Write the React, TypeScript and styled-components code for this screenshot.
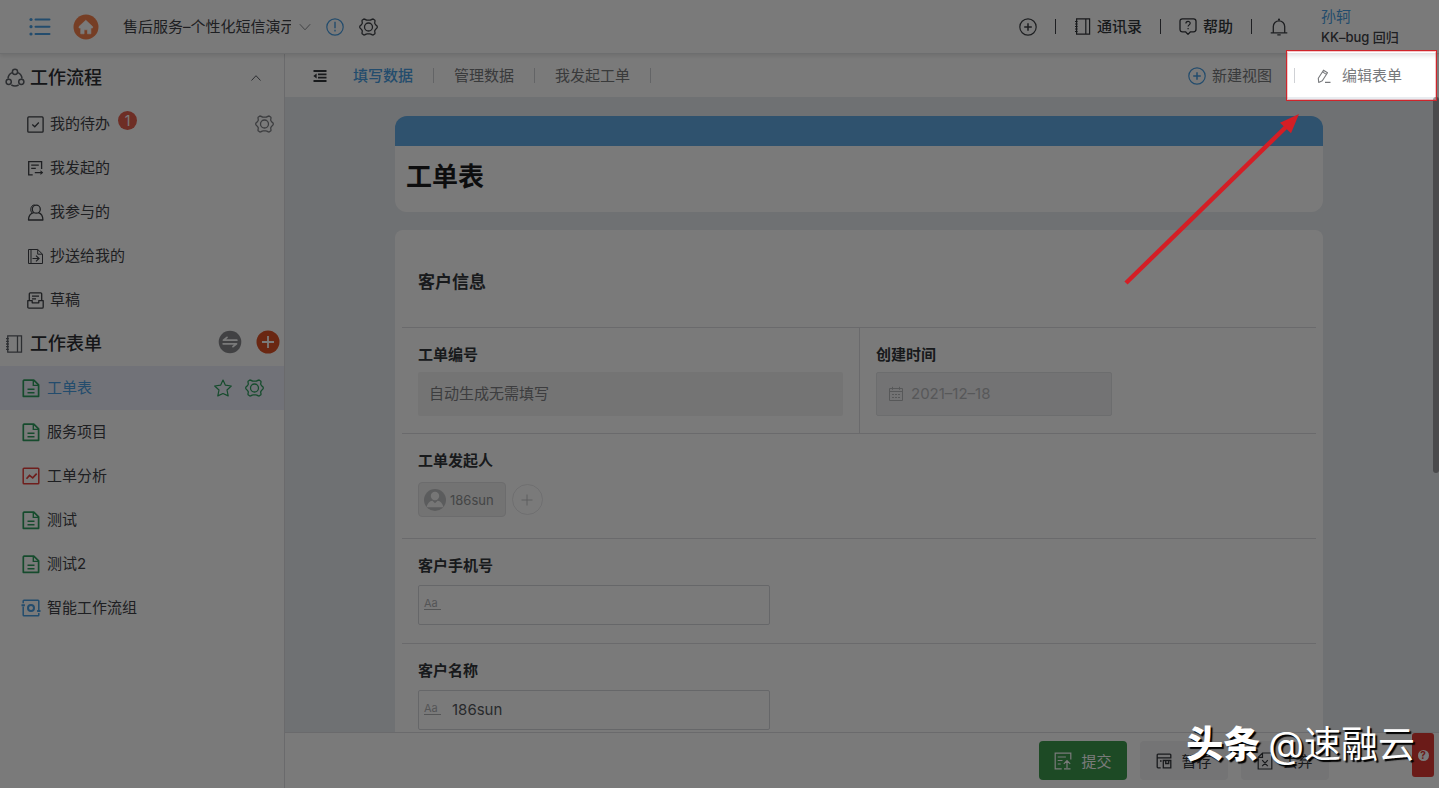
import React from "react";
import styled, { createGlobalStyle, css } from "styled-components";

const Global = createGlobalStyle`
  *, *::before, *::after { box-sizing: border-box; }
  body { margin: 0; }
  body, button, input { font-family: Inter, "Noto Sans CJK SC", sans-serif; }
  h1, h2, h3, p, ul { margin: 0; padding: 0; font-weight: inherit; }
  button { border: 0; background: none; padding: 0; color: inherit; font-size: inherit; cursor: pointer; }
  a { color: inherit; text-decoration: none; }
  svg { display: block; flex: none; }
`;

const c = {
  text: "#3f4247",
  strong: "#34373c",
  muted: "#77797c",
  blue: "#4a9fe3",
  bar: "#62abe5",
  green: "#2f9e5f",
  page: "#e9ecf0",
  line: "#dddee1",
};

/* ---------- icons ---------- */

const Svg = ({ w = 18, h = w, vb, children, sw = 1.3 }: any) => (
  <svg width={w} height={h} viewBox={vb || `0 0 ${w} ${h}`} fill="none" stroke="currentColor" strokeWidth={sw} aria-hidden="true">
    {children}
  </svg>
);

const ListIcon = () => (
  <Svg w={22} h={20} sw={2}>
    <path d="M6.5 2.5h14M6.5 9.7h14M6.5 17h14" strokeLinecap="round" />
    <g fill="currentColor" stroke="none">
      <circle cx="2" cy="2.5" r="1.6" /><circle cx="2" cy="9.7" r="1.6" /><circle cx="2" cy="17" r="1.6" />
    </g>
  </Svg>
);
const HomeIcon = () => (
  <svg width="26" height="26" viewBox="0 0 26 26" aria-hidden="true">
    <circle cx="13" cy="13" r="12.5" fill="#f7834f" />
    <path d="M12.8 6.2 19.6 12.6v1.4h-1.7V19.800h-3.400v-4h-3.400v4H7.700V14H6v-1.400z" fill="#fff" stroke="#fff" strokeWidth="0.6" strokeLinejoin="round" />
  </svg>
);
const ChevronIcon = ({ up = false }: { up?: boolean }) => (
  <Svg w={12} h={8} sw={1}>{up ? <path d="M1.5 6.5 6 1.7l4.500 4.800" /> : <path d="M.8 1.200 6 6.800l5.200-5.600" />}</Svg>
);
const AlertIcon = () => (
  <Svg w={18} sw={1.2}>
    <circle cx="9" cy="9" r="8.200" /><path d="M9 3.800v6.500M9 11.800v1.800" strokeWidth="1.400" />
  </Svg>
);
const GearIcon = () => (
  <Svg w={19} h={18} vb="-9.500 -9 19 18" sw={1.3}>
    <path
      d="M-4.600-8 C-3-8-2.800-6.800-1.500-6.800H1.500C2.800-6.800 3-8 4.600-8L6.400-6.700C6.900-5.500 5.700-4.700 6.400-3.400L7.300-2.100C7.900-1.200 8.800-1.400 8.800 0C8.800 1.400 7.900 1.200 7.300 2.100L6.400 3.400C5.700 4.700 6.900 5.500 6.400 6.700L4.600 8C3 8 2.800 6.800 1.500 6.800H-1.500C-2.800 6.800-3 8-4.600 8L-6.400 6.700C-6.900 5.500-5.700 4.700-6.400 3.400L-7.300 2.100C-7.900 1.200-8.800 1.400-8.800 0C-8.800-1.400-7.900-1.200-7.300-2.100L-6.400-3.400C-5.700-4.700-6.900-5.500-6.400-6.700Z"
      strokeLinejoin="round"
    />
    <circle cx="0" cy="0" r="4" />
  </Svg>
);
const PlusCircleIcon = () => (
  <Svg w={18} sw={1.2}><circle cx="9" cy="9" r="8.200" /><path d="M9 5.200v7.600M5.200 9h7.600" strokeWidth="1.500" /></Svg>
);
const BookIcon = ({ size = 17 }: { size?: number }) => (
  <Svg w={size} vb="0 0 17 17" sw={1.2}>
    <path d="M2.600.8h13v15.400h-13zM11.800.8v15.400" />
    <path d="M1 3.500h2.600M1 6h2.600M1 8.500h2.600M1 11h2.600M1 13.500h2.600" />
  </Svg>
);
const HelpIcon = () => (
  <Svg w={18} sw={1.3}>
    <path d="M3.500.8h11Q17 .8 17 3.300v8q0 2.500-2.500 2.500h-3L9 16.400l-2.500-2.600h-3Q1 13.800 1 11.300v-8Q1 .8 3.500.8z" strokeLinejoin="round" />
    <path d="M6.900 5.500c0-2.800 4.300-2.700 4.300-.2 0 1.600-2.100 1.600-2.100 3.300M9.100 10v1.300" strokeWidth="1.200" />
  </Svg>
);
const BellIcon = () => (
  <Svg w={18} sw={1.3}>
    <path d="M3.300 14.500V8.500a5.700 5.700 0 0 1 11.400 0v6M.7 14.900h16.600M7.300 16.900h3.400" /><circle cx="9" cy="1.600" r="1.100" fill="currentColor" stroke="none" />
  </Svg>
);
const FlowIcon = () => (
  <Svg w={20} sw={1.5}>
    <circle cx="10" cy="3.800" r="2.600" /><circle cx="3.700" cy="13.800" r="2.600" /><circle cx="16.300" cy="13.800" r="2.600" />
    <path d="M6.900 4.600A7 7 0 0 0 3 10.600M13.100 4.600a7 7 0 0 1 3.900 6M6.300 16.900a7.200 7.200 0 0 0 7.400 0" />
  </Svg>
);
const TodoIcon = () => (
  <Svg w={17} sw={1.3}><rect x=".8" y=".9" width="15.300" height="15.300" rx="1" /><path d="m5.300 8.500 2.500 2.300 4-4.300" /></Svg>
);
const StartedIcon = () => (
  <Svg w={17} sw={1.3}>
    <path d="M14.600 9V1.700H1.700v13.200h4M4.200 5.200h7.600M4.200 8.300h4.600M7.800 12.600h7.500" /><path d="m13.500 10.200 2.700 2.400-2.700 2.400z" fill="currentColor" stroke="none" />
  </Svg>
);
const PersonIcon = () => (
  <Svg w={17} sw={1.3}>
    <circle cx="9.300" cy="5.200" r="4" /><path d="M6.800 8.600C3.500 9.400 1.500 12.500 1.500 16h14.400c0-3.500-2-6.600-4.500-7.400" strokeLinejoin="round" /><path d="M7.500.8C3.200 1.500 2.800 7 5.200 9" strokeWidth="1" />
  </Svg>
);
const CopyToIcon = () => (
  <Svg w={17} sw={1}>
    <path d="M1.500 1.500h9.200l4.800 4.700v9.300h-14zM10.700 1.500v4.700h4.800M4 1.500v14" /><path d="M5.500 10.500h6.300M9 7.600l3 2.900L9 13.400" strokeWidth="1.200" />
  </Svg>
);
const DraftIcon = () => (
  <Svg w={17} sw={1.3}>
    <path d="M2.300 8V1.800q0-1 1-1h10.400q1 0 1 1V8M5 4.200h7M5 6.800h4" /><path d="M.8 8.600h4.400v2.200h6.600V8.600h4.400v6.400q0 1.200-1.200 1.200H2Q.8 16.200.8 15z" strokeLinejoin="round" />
  </Svg>
);
const SwapIcon = () => (
  <svg width="24" height="24" viewBox="0 0 24 24" aria-hidden="true">
    <circle cx="12" cy="12" r="11.300" fill="#88898d" />
    <path d="M18.800 10.200H5.500L9 7.400M5.200 13.800h13.300L15 16.600" fill="none" stroke="#fff" strokeWidth="1.800" strokeLinecap="round" strokeLinejoin="round" />
  </svg>
);
const AddIcon = () => (
  <svg width="24" height="24" viewBox="0 0 24 24" aria-hidden="true">
    <circle cx="12" cy="12" r="11.500" fill="#de5327" /><path d="M12 6v12M6 12h12" stroke="#fff" strokeWidth="1.800" />
  </svg>
);
const SheetIcon = () => (
  <Svg w={18} h={19} sw={1.7}>
    <path d="M2 1.200h9.800l4.800 4.700v11.400H1.300V1.900z" strokeLinejoin="round" /><path d="M11.300 1.500v4.900h5.200" strokeWidth="1.400" /><path d="M5.500 10.300h7M5.500 13.800h7" strokeWidth="1.500" />
  </Svg>
);
const ChartIcon = () => (
  <Svg w={18} sw={1.500}><rect x="1.200" y="1.200" width="15.600" height="15.600" rx=".8" /><path d="m4.500 11.800 3-3.400 3.200 2.500 4-4.200" strokeWidth="1.700" /></Svg>
);
const SmartIcon = () => (
  <Svg w={20} h={18} sw={1.5}>
    <path d="M2.200 4.200V2q0-.8.8-.8h14q.8 0 .8.800v9M17.800 14v2q0 .8-.8.8H3q-.8 0-.8-.8V7.500" /><circle cx="10" cy="9" r="3" strokeWidth="2" />
    <path d="M.5 6.200h3.400M16.100 12h3.400" strokeWidth="2" />
  </Svg>
);
const StarIcon = () => (
  <Svg w={18} sw={1.2}><path d="m9 1 2.400 5.200 5.900.8-4.300 4 1.200 5.900L9 14.500l-5.200 2.400L5 11 .7 7l5.900-.8z" strokeLinejoin="round" /></Svg>
);
const FoldIcon = () => (
  <Svg w={14} h={12} sw={1.8}>
    <path d="M.5 1h13M5 4.400h8.500M5 7.600h8.500M.5 11h13" /><path d="M3.600 3.500v5L.3 6z" fill="currentColor" stroke="none" />
  </Svg>
);
const PencilIcon = () => (
  <Svg w={14} h={16} sw={1.100}>
    <path d="M1.300 10.300 6.500 2.200l4 2.500-5.200 8.100-3.600 1.600zM5.500 3.900l3.900 2.500M8 14.400h5.500" strokeLinejoin="round" />
  </Svg>
);
const CalendarIcon = () => (
  <Svg w={16} sw={1}>
    <path d="M1.500 2.500h13v12h-13zM1.500 5.500h13M4.500.8v3M11.500.8v3" /><path d="M4 8.500h2M7 8.500h2M10 8.500h2M4 11.500h2M7 11.500h2M10 11.500h2" />
  </Svg>
);
const AvatarIcon = () => (
  <svg width="22" height="22" viewBox="0 0 22 22" aria-hidden="true">
    <circle cx="11" cy="11" r="11" fill="#bfc0c2" /><circle cx="11" cy="7" r="4.200" fill="#f7f7f7" />
    <path d="M2.600 18.200C3.300 14.500 5.500 12 8.400 11.700l2.600 2.600 2.600-2.600c2.900.3 5.100 2.800 5.800 6.500z" fill="#f7f7f7" />
  </svg>
);
const SubmitIcon = () => (
  <Svg w={18} sw={1.2}>
    <path d="M16.800 7.500V1.200H1.200v15.600h6.500M3.700 5h8.200M3.700 8.500h4.800M3.700 12h3M13 16V9M9.800 11.800 13 8.600l3.200 3.200M10 16.900h6.500" />
  </Svg>
);
const SaveIcon = () => (
  <Svg w={16} sw={1.3}>
    <path d="M14.800 5.500V2q0-.8-.8-.8H2q-.8 0-.8.800v12q0 .8.8.8h2.700M1.200 4.800h13.600M4 8h1.600" /><path d="M7.300 7.500h7.500v7.300H7.300zM9.700 7.500v3h3v-3" />
  </Svg>
);
const DiscardIcon = () => (
  <Svg w={16} h={18} sw={1.2}><path d="M5.500 1h9.300v16H1.200V5.300zM5.500 1v4.300H1.200M5.200 8.200l5.600 6M10.800 8.200l-5.600 6" /></Svg>
);

/* ---------- shell ---------- */

const Shell = styled.div`
  position: relative;
  display: flex;
  flex-direction: column;
  height: 100vh;
  min-height: 600px;
  overflow: hidden;
  background: #fff;
  color: ${c.text};
  font-size: 15px;
  line-height: 22px;
`;
const Body = styled.div`display: flex; flex: 1; min-height: 0;`;
const Main = styled.main`display: flex; flex-direction: column; flex: 1; min-width: 0; border-left: 1px solid ${c.line};`;

const Header = styled.header`
  position: relative;
  z-index: 1;
  display: flex;
  align-items: center;
  justify-content: space-between;
  height: 54px;
  flex: none;
  padding-left: 29px;
  background: #fff;
  border-bottom: 1px solid #e4e5e8;
  box-shadow: 0 2px 4px rgba(0, 0, 0, 0.1);
`;
const Group = styled.div<{ $gap: number }>`display: flex; align-items: center; gap: ${(p) => p.$gap}px;`;
const IconButton = styled.button<{ $color?: string }>`display: flex; color: ${(p) => p.$color || "inherit"};`;
const AppName = styled.button`
  display: flex;
  align-items: center;
  gap: 8px;
  margin-left: 2px;
  line-height: 22px;
  svg { color: #8a8c90; }
`;
const Clip = styled.span`width: 168px; overflow: hidden; white-space: nowrap; text-align: left;`;
const HeaderLink = styled.a`display: flex; align-items: center; gap: 6px; font-weight: 500; color: ${c.strong};`;
const Bar = styled.i<{ $light?: boolean }>`width: 1px; height: 15px; background: ${(p) => (p.$light ? "#cfd1d5" : "#3f4247")};`;
const User = styled.div`
  width: 118px;
  margin-left: 15px;
  line-height: 20px;
  a { display: block; color: ${c.blue}; }
  p { font-size: 13px; font-weight: 500; }
`;

/* ---------- sidebar ---------- */

const Side = styled.nav`width: 284px; flex: none; background: #fff; ul { list-style: none; }`;
const SideHead = styled.div<{ $tall?: boolean }>`
  display: flex;
  align-items: center;
  height: ${(p) => (p.$tall ? 48 : 44)}px;
  padding: 0 4px 0 5px;
  gap: 5px;
  svg { color: #5c6067; }
  h2 { flex: 1; font-size: 18px; font-weight: 500; color: #2c2e32; }
`;
const HeadIcon = styled.span`display: flex; width: 20px;`;
const SideActions = styled.div`display: flex; align-items: center; gap: 14px; padding-bottom: 4px;`;
const ChevronSlot = styled(IconButton)`margin-right: 18px;`;
const Row = styled.li<{ $form?: boolean; $active?: boolean }>`
  display: flex;
  align-items: center;
  height: 44px;
  padding: 0 ${(p) => (p.$form ? 20 : 10)}px 0 ${(p) => (p.$form ? 21 : 27)}px;
  ${(p) => p.$active && css`background: #edeffb; color: ${c.blue};`}
  a { display: flex; align-items: center; gap: 6px; }
`;
const Tint = styled.span<{ $color: string }>`display: flex; justify-content: center; width: ${(p) => (p.$color === "inherit" ? 17 : 20)}px; color: ${(p) => p.$color};`;
const Tools = styled.div<{ $color: string }>`
  display: flex; gap: 13px; margin-left: auto; color: ${(p) => p.$color};
`;
const Badge = styled.span`
  width: 19px; height: 19px; margin: -8px 0 0 8px; border-radius: 50%;
  background: #e5604f; color: #fff; font-size: 14px; line-height: 19px; text-align: center;
`;

/* ---------- toolbar and form ---------- */

const Toolbar = styled.div`
  display: flex;
  align-items: center;
  justify-content: space-between;
  height: 43px;
  flex: none;
  padding: 0 37px 0 28px;
  color: ${c.muted};
`;
const Tabs = styled(Group)`margin-left: 6px;`;
const Tab = styled.a<{ $active?: boolean }>`color: ${(p) => (p.$active ? c.blue : "inherit")}; font-weight: ${(p) => (p.$active ? 500 : 400)};`;
const ToolButton = styled.button<{ $gap: number }>`
  display: flex; align-items: center; gap: ${(p) => p.$gap}px; line-height: 22px;
`;
const IconTint = styled.span`display: flex; color: ${c.blue};`;
const Scroll = styled.div`
  position: relative;
  flex: 1;
  min-height: 0;
  overflow: hidden;
  padding: 19px 116px 0 110px;
  background: ${c.page};
`;
const Thumb = styled.div`
  position: absolute; top: 0; right: 0; width: 6px; height: 376px; border-radius: 3px; background: #9b9c9f;
`;
const TitleCard = styled.section`
  height: 96px;
  margin-bottom: 18px;
  padding: 15px 11px;
  overflow: hidden;
  border-top: 30px solid ${c.bar};
  border-radius: 12px;
  background: #fff;
  h1 { font-size: 26px; font-weight: 700; line-height: 32px; color: #1c1d1f; }
`;
const FormCard = styled.form`padding: 0 7px; border-radius: 8px; background: #fff;`;
const FormHead = styled.h2`
  padding: 41px 16px 34px; font-size: 17px; font-weight: 700; line-height: 22px; color: ${c.strong};
`;
const Cell = styled.div<{ $gap: number }>`
  display: flex;
  flex-direction: column;
  align-items: flex-start;
  gap: ${(p) => p.$gap}px;
  height: 104px;
  padding: 16px 16px 0;
  & + & { border-left: 1px solid ${c.line}; }
  > label, > h3 { font-size: 15px; font-weight: 700; line-height: 22px; color: ${c.strong}; }
`;
const FormRow = styled.div<{ $split?: boolean }>`
  display: grid;
  grid-template-columns: ${(p) => (p.$split ? "1fr 1fr" : "1fr")};
  border-top: 1px solid ${c.line};
  ${(p) => p.$split && css`${Cell} { height: 105px; }`}
`;
const Field = styled.div<{ $kind: "auto" | "date" | "text" }>`
  display: flex;
  align-items: center;
  gap: 7px;
  width: ${(p) => ({ auto: "100%", date: "236px", text: "352px" })[p.$kind]};
  height: ${(p) => (p.$kind === "text" ? 40 : 44)}px;
  padding: 0 11px;
  border-radius: 2px;
  ${(p) => p.$kind === "auto" && css`background: #f2f2f2; --ink: #7f8184;`}
  ${(p) => p.$kind === "date" && css`background: #f0f0f3; border: 1px solid #e2e3e6; color: #b7b8bb; --ink: #b7b8bb;`}
  ${(p) => p.$kind === "text" && css`border: 1px solid #d6d7dc; padding: 0 5px; gap: 11px; --ink: #55585d;`}
  input {
    flex: 1; min-width: 0; padding: 0; border: 0; outline: 0; background: none;
    font-size: 15px; line-height: 22px; color: var(--ink); opacity: 1;
  }
  input::placeholder { color: var(--ink); opacity: 1; }
`;
const TextMark = styled.span`
  width: 17px; margin-top: -4px; border-bottom: 1px solid #b0b1b5;
  font-size: 11px; line-height: 12px; color: #b0b1b5;
`;
const People = styled.div`display: flex; align-items: center; gap: 6px;`;
const Chip = styled.span`
  display: flex; align-items: center; gap: 4px; height: 35px; padding: 0 11px 0 5px;
  border: 1px solid #e2e2e4; border-radius: 4px; background: #f0f0f0; color: #8e9092; font-size: 13px;
`;
const RoundAdd = styled.button`
  display: grid; place-items: center; width: 31px; height: 31px;
  border: 1px solid #e8e8ea; border-radius: 50%; color: #c2c3c6;
`;

const Footer = styled.footer`
  display: flex;
  align-items: flex-start;
  justify-content: flex-end;
  gap: 13px;
  height: 56px;
  flex: none;
  padding: 8px 110px 0;
  border-top: 1px solid ${c.line};
`;
const Action = styled.button<{ $primary?: boolean }>`
  display: flex;
  align-items: center;
  justify-content: center;
  gap: 9px;
  width: 88px;
  height: 39px;
  border-radius: 4px;
  background: ${(p) => (p.$primary ? "#3d9b4e" : "#f3f3f5")};
  color: ${(p) => (p.$primary ? "#fff" : c.strong)};
`;

/* ---------- guide layer ---------- */

const Guide = styled.div`position: absolute; inset: 0; z-index: 2; pointer-events: none;`;
const Spotlight = styled.div`
  position: absolute; top: 50px; right: 2px; width: 151px; height: 51px;
  border: 1px solid #d0252b; box-shadow: 0 0 0 3000px rgba(0, 0, 0, 0.52), inset 0 0 0 1px rgba(208, 37, 43, 0.25);
`;
const Pointer = styled.div`position: absolute; top: 112px; right: 137px;`;
const HelpTab = styled.button`
  position: absolute; right: 5px; bottom: 11px; display: grid; place-items: center;
  width: 22px; height: 44px; border-radius: 3px; background: #e03a34;
`;
const HelpMark = styled.span`
  width: 11px; height: 11px; border-radius: 50%; background: #fff;
  color: #e03a34; font-size: 10px; font-weight: 700; line-height: 11px; text-align: center;
`;
const Credit = styled.p`
  position: absolute; right: 24px; bottom: 20px; display: flex; gap: 8px;
  color: #fff; font-size: 37px; line-height: 46px; white-space: nowrap;
  text-shadow: 2px 2px 1px #000;
  b { font-weight: 900; }
`;

const flows = [
  { name: "我的待办", icon: <TodoIcon />, count: 1 },
  { name: "我发起的", icon: <StartedIcon /> },
  { name: "我参与的", icon: <PersonIcon /> },
  { name: "抄送给我的", icon: <CopyToIcon /> },
  { name: "草稿", icon: <DraftIcon /> },
];
const forms = [
  { name: "工单表", icon: <SheetIcon />, color: c.green, active: true },
  { name: "服务项目", icon: <SheetIcon />, color: c.green },
  { name: "工单分析", icon: <ChartIcon />, color: "#e8403c" },
  { name: "测试", icon: <SheetIcon />, color: c.green },
  { name: "测试2", icon: <SheetIcon />, color: c.green },
  { name: "智能工作流组", icon: <SmartIcon />, color: c.blue },
];

export default function App() {
  return (
    <Shell>
      <Global />
      <Header>
        <Group $gap={22}>
          <IconButton $color={c.blue} aria-label="菜单"><ListIcon /></IconButton>
          <IconButton aria-label="首页"><HomeIcon /></IconButton>
          <Group $gap={15}>
            <AppName><Clip>售后服务–个性化短信演示</Clip><ChevronIcon /></AppName>
            <IconButton $color={c.blue} aria-label="提示"><AlertIcon /></IconButton>
            <IconButton aria-label="设置"><GearIcon /></IconButton>
          </Group>
        </Group>
        <Group $gap={18}>
          <IconButton aria-label="新建"><PlusCircleIcon /></IconButton>
          <Bar />
          <HeaderLink href="#contacts"><BookIcon />通讯录</HeaderLink>
          <Bar />
          <HeaderLink href="#help"><HelpIcon />帮助</HeaderLink>
          <Bar />
          <IconButton aria-label="通知"><BellIcon /></IconButton>
          <User><a href="#me">孙轲</a><p>KK–bug 回归</p></User>
        </Group>
      </Header>

      <Body>
        <Side>
          <SideHead $tall>
            <HeadIcon><FlowIcon /></HeadIcon><h2>工作流程</h2>
            <ChevronSlot aria-label="收起"><ChevronIcon up /></ChevronSlot>
          </SideHead>
          <ul>
            {flows.map((f) => (
              <Row key={f.name}>
                <a href="#flow"><Tint $color="inherit">{f.icon}</Tint>{f.name}</a>
                {f.count && <Badge>{f.count}</Badge>}
                {f.count && <Tools $color="#7d7f84"><IconButton aria-label="待办设置"><GearIcon /></IconButton></Tools>}
              </Row>
            ))}
          </ul>
          <SideHead>
            <HeadIcon><BookIcon size={18} /></HeadIcon><h2>工作表单</h2>
            <SideActions>
              <IconButton aria-label="切换"><SwapIcon /></IconButton>
              <IconButton aria-label="添加表单"><AddIcon /></IconButton>
            </SideActions>
          </SideHead>
          <ul>
            {forms.map((f) => (
              <Row key={f.name} $form $active={f.active}>
                <a href="#form"><Tint $color={f.color}>{f.icon}</Tint>{f.name}</a>
                {f.active && (
                  <Tools $color={c.green}>
                    <IconButton aria-label="收藏"><StarIcon /></IconButton>
                    <IconButton aria-label="表单设置"><GearIcon /></IconButton>
                  </Tools>
                )}
              </Row>
            ))}
          </ul>
        </Side>

        <Main>
          <Toolbar>
            <Group $gap={20}>
              <IconButton $color={c.strong} aria-label="折叠"><FoldIcon /></IconButton>
              <Tabs $gap={20}>
                <Tab href="#fill" $active>填写数据</Tab>
                <Bar $light />
                <Tab href="#manage">管理数据</Tab>
                <Bar $light />
                <Tab href="#mine">我发起工单</Tab>
                <Bar $light />
              </Tabs>
            </Group>
            <Group $gap={22}>
              <ToolButton $gap={6}><IconTint><PlusCircleIcon /></IconTint>新建视图</ToolButton>
              <Bar $light />
              <ToolButton $gap={11}><PencilIcon />编辑表单</ToolButton>
            </Group>
          </Toolbar>

          <Scroll>
            <TitleCard><h1>工单表</h1></TitleCard>
            <FormCard>
              <FormHead>客户信息</FormHead>
              <FormRow $split>
                <Cell $gap={6}>
                  <label htmlFor="no">工单编号</label>
                  <Field $kind="auto"><input id="no" disabled placeholder="自动生成无需填写" /></Field>
                </Cell>
                <Cell $gap={6}>
                  <label htmlFor="date">创建时间</label>
                  <Field $kind="date"><CalendarIcon /><input id="date" disabled defaultValue="2021–12–18" /></Field>
                </Cell>
              </FormRow>
              <FormRow>
                <Cell $gap={10}>
                  <h3>工单发起人</h3>
                  <People>
                    <Chip><AvatarIcon />186sun</Chip>
                    <RoundAdd type="button" aria-label="添加人员"><Svg w={12} sw={1}><path d="M6 .5v11M.5 6h11" /></Svg></RoundAdd>
                  </People>
                </Cell>
              </FormRow>
              <FormRow>
                <Cell $gap={8}>
                  <label htmlFor="phone">客户手机号</label>
                  <Field $kind="text"><TextMark>Aa</TextMark><input id="phone" /></Field>
                </Cell>
              </FormRow>
              <FormRow>
                <Cell $gap={8}>
                  <label htmlFor="name">客户名称</label>
                  <Field $kind="text"><TextMark>Aa</TextMark><input id="name" defaultValue="186sun" /></Field>
                </Cell>
              </FormRow>
            </FormCard>
            <Thumb />
          </Scroll>

          <Footer>
            <Action $primary><SubmitIcon />提交</Action>
            <Action><SaveIcon />暂存</Action>
            <Action><DiscardIcon />丢弃</Action>
          </Footer>
        </Main>
      </Body>

      <HelpTab aria-label="帮助"><HelpMark>?</HelpMark></HelpTab>

      <Guide>
        <Spotlight />
        <Pointer>
          <svg width="178" height="174" viewBox="0 0 178 174" fill="#d41e25" aria-hidden="true">
            <path d="M2 171 164 13" stroke="#d41e25" strokeWidth="4.500" />
            <path d="M175 2 156 10.700 167 21.300z" />
          </svg>
        </Pointer>
        <Credit><b>头条</b><span>@速融云</span></Credit>
      </Guide>
    </Shell>
  );
}
